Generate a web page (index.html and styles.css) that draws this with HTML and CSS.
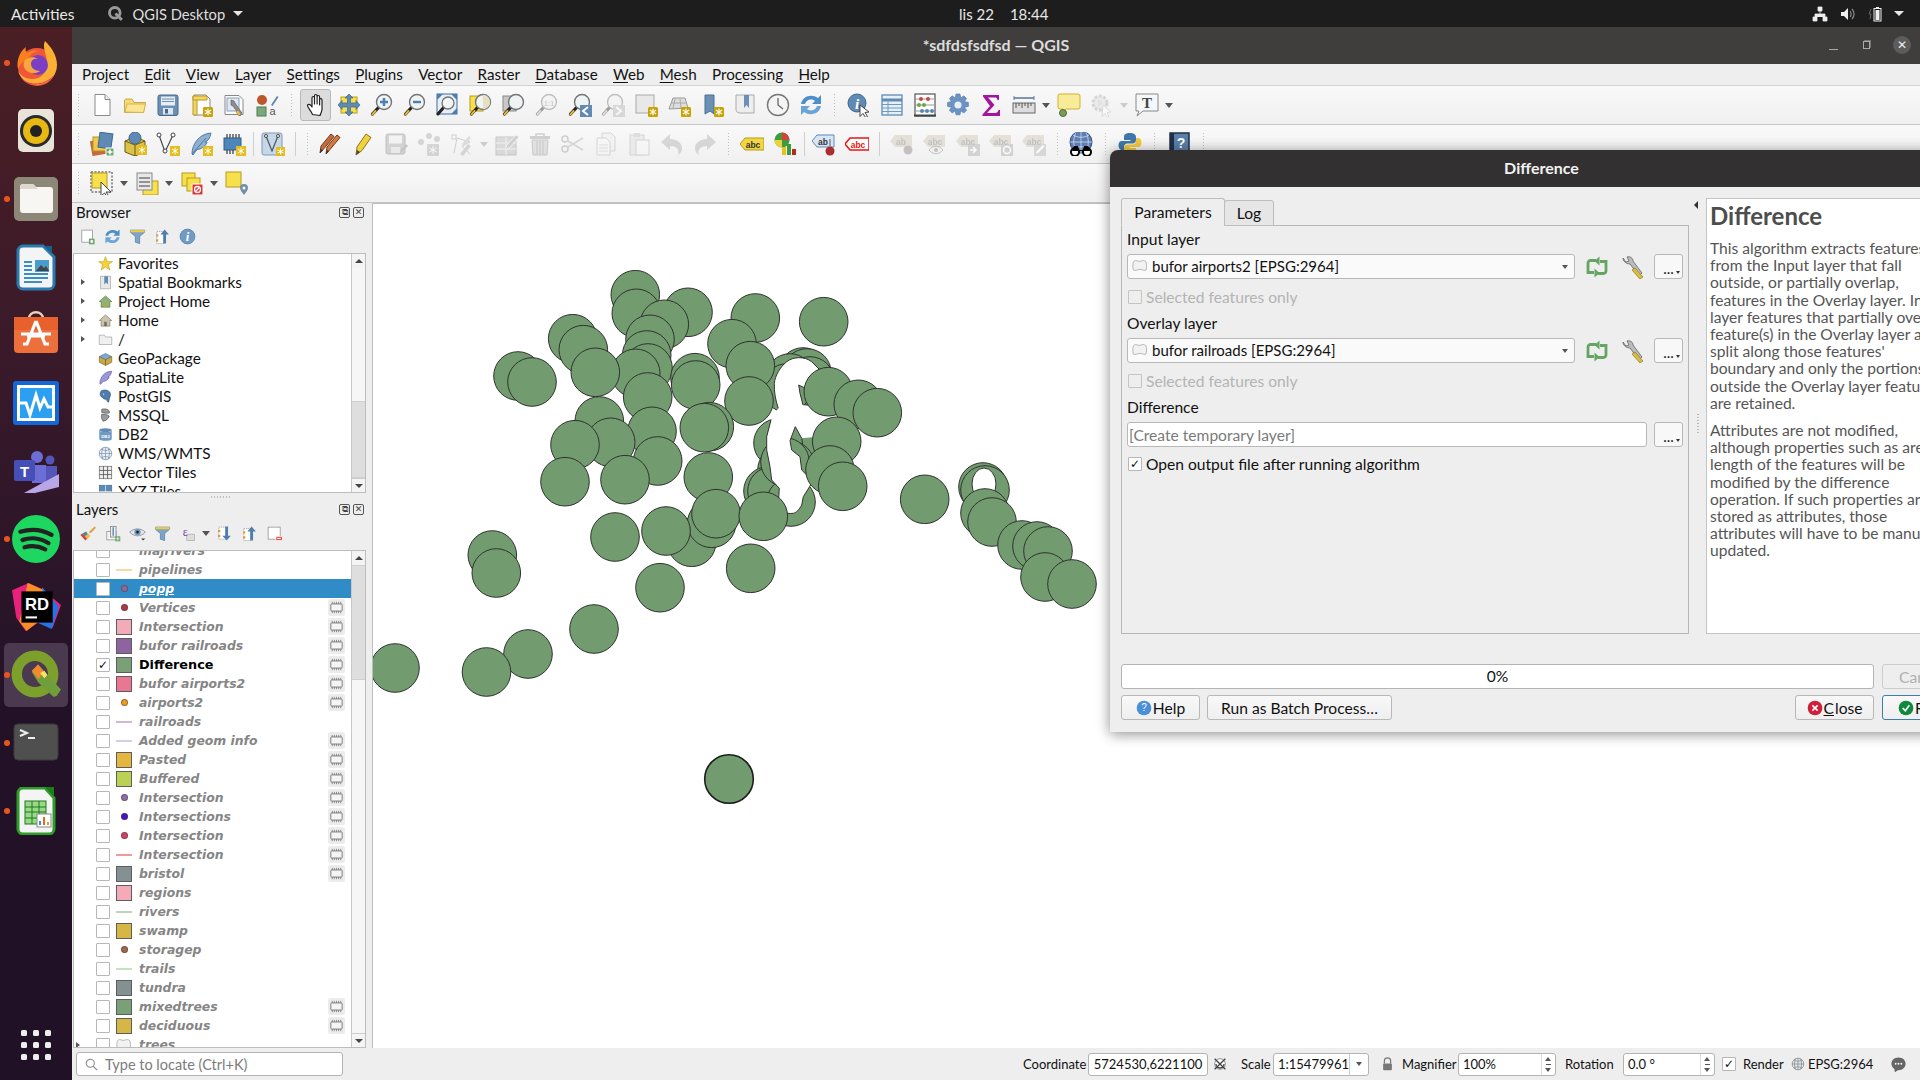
FILE: index.html
```html
<!DOCTYPE html>
<html lang="pl">
<head>
<meta charset="utf-8">
<title>*sdfdsfsdfsd — QGIS</title>
<link rel="stylesheet" href="styles.css">
</head>
<body>
<svg class="defs" aria-hidden="true">
<symbol id="new" viewBox="0 0 24 24"><path d="M5 1.500h10l5 5v16H5z" fill="#fff" stroke="#8a8a8a"/><path d="M15 1.500v5h5" fill="#eee" stroke="#8a8a8a"/></symbol>
<symbol id="open" viewBox="0 0 24 24"><path d="M1.500 7V19.500h19L22.500 9.500H11L9 6H3z" fill="#f6d978" stroke="#c9a848"/><path d="M2 19l2-8h18.500l-2 8.500z" fill="#fbe592" stroke="#d6b552"/></symbol>
<symbol id="save" viewBox="0 0 24 24"><rect x="2" y="2" width="20" height="20.500" rx="2" fill="#6c8fb4" stroke="#446a90"/><rect x="5" y="3.500" width="14" height="9" fill="#e8edf2"/><path d="M6 6h12M6 8.500h12" stroke="#6c8fb4"/><rect x="7" y="15" width="10" height="6.500" fill="#dfe6ee"/><rect x="9" y="16" width="3" height="4.500" fill="#446a90"/></symbol>
<symbol id="badge" viewBox="0 0 24 24"><rect x="14" y="14" width="10" height="10" rx="1.500" fill="#c9a100"/><path d="M19 15.500v7M15.800 17l6.400 4M15.800 21l6.400-4" stroke="#fff" stroke-width="1.100"/></symbol>
<symbol id="layoutnew" viewBox="0 0 24 24"><path d="M5 2h12l4 4v16H5z" fill="#fff" stroke="#888"/><path d="M4 3h4v19H4z" fill="#f3d65b" stroke="#b79a2e"/><path d="M4 3h14v4H4z" fill="#f3d65b" stroke="#b79a2e"/><use href="#badge"/></symbol>
<symbol id="layoutmgr" viewBox="0 0 24 24"><path d="M3 2.500h14l4 4v15H3z" fill="#fff" stroke="#888"/><rect x="5" y="5" width="12" height="13" fill="#dfe8f2" stroke="#8aa0b8"/><path d="M9 7l3 1 1 2 7 10-2 3-7-10-2-1z" fill="#8d8d8d" stroke="#555" stroke-width=".6"/><path d="M16 17l3 4-2 2-3-4z" fill="#e9c23d" stroke="#866" stroke-width=".5"/></symbol>
<symbol id="style" viewBox="0 0 24 24"><circle cx="7" cy="7" r="5" fill="#c0562b"/><path d="M16 12l6-9 1.500 1-6 9z" fill="#5f86ad"/><rect x="2" y="14" width="9" height="9" fill="#79a97a" stroke="#4f7a50"/></symbol>
<symbol id="hand" viewBox="0 0 24 24"><path d="M8.500 21.500c-1-3-5-7-5-9 0-1.500 2-1.500 3-.5l1.500 2V5c0-2 2.500-2 2.500 0v6-8c0-2 2.600-2 2.600 0v8-7c0-2 2.500-2 2.500 0v8-5c0-1.800 2.400-1.800 2.400 0v9c0 3-1.500 5-2 6.500z" fill="#fff" stroke="#222" stroke-width="1.200" stroke-linejoin="round"/></symbol>
<symbol id="pansel" viewBox="0 0 24 24"><rect x="4" y="4" width="16" height="16" fill="#f6e04c" stroke="#c09c1a"/><path d="M12 1l4 4h-2.500v5H19V7.500l4 4.500-4 4.500V14h-5.500v5H16l-4 4-4-4h2.500v-5H5v2.500L1 12l4-4.500V10h5.500V5H8z" fill="#5f8ab4" stroke="#3c658f" stroke-width=".7"/></symbol>
<symbol id="lens" viewBox="0 0 24 24"><path d="M9 14l-6.500 7" stroke="#222" stroke-width="3.200" stroke-linecap="round"/><path d="M5.500 18l-3 3.200" stroke="#e6b92c" stroke-width="2" stroke-linecap="round"/><circle cx="14" cy="9" r="7.500" fill="#f0f3f4" stroke="#6f7578" stroke-width="1.400"/></symbol>
<symbol id="zoomin" viewBox="0 0 24 24"><use href="#lens"/><path d="M14 5v8M10 9h8" stroke="#4f7eae" stroke-width="2.400"/></symbol>
<symbol id="zoomout" viewBox="0 0 24 24"><use href="#lens"/><path d="M10 9h8" stroke="#4f7eae" stroke-width="2.400"/></symbol>
<symbol id="zoomfull" viewBox="0 0 24 24"><rect x="1" y="1" width="20" height="20" fill="#e8eef4" stroke="#3f6f9f"/><path d="M1 1h6L1 7zM21 1v6l-6-6zM21 21h-6l6-6z" fill="#4f7eae"/><path d="M8 14l-6 7" stroke="#222" stroke-width="3" stroke-linecap="round"/><circle cx="12" cy="10" r="6" fill="#f2f4f5" stroke="#6f7578" stroke-width="1.300"/></symbol>
<symbol id="zoomsel" viewBox="0 0 24 24"><rect x="1" y="3" width="13" height="15" fill="#f6e04c" stroke="#b9981c"/><use href="#lens"/><path d="M14 1.800a7.200 7.200 0 010 14.400z" fill="#e7e0c0"/></symbol>
<symbol id="zoomlayer" viewBox="0 0 24 24"><rect x="1" y="3" width="13" height="15" fill="#c8c8c8" stroke="#8a8a8a"/><use href="#lens"/></symbol>
<symbol id="zoomlast" viewBox="0 0 24 24"><use href="#lens"/><rect x="12" y="12" width="12" height="12" fill="#5f8ab4"/><path d="M20 14l-5 4 5 4" fill="none" stroke="#fff" stroke-width="2"/></symbol>
<symbol id="zoomnext" viewBox="0 0 24 24"><use href="#lens"/><rect x="12" y="12" width="12" height="12" fill="#aab4bd"/><path d="M15 14l5 4-5 4" fill="none" stroke="#fff" stroke-width="2"/></symbol>
<symbol id="bookmark" viewBox="0 0 24 24"><rect x="2" y="2" width="18" height="18" fill="#e8e8e8" stroke="#aaa"/><use href="#badge"/></symbol>
<symbol id="temp" viewBox="0 0 24 24"><path d="M2 16L6 5h12l3 10z" fill="#ddd" stroke="#999"/><path d="M8 6l-2 9M13 6l1 9M4 10h15" stroke="#aaa"/><use href="#badge"/></symbol>
<symbol id="bmnew" viewBox="0 0 24 24"><path d="M5 2h9v19l-4-3-5 3z" fill="#6c8fb4" stroke="#4b7096"/><use href="#badge"/></symbol>
<symbol id="bmshow" viewBox="0 0 24 24"><path d="M3 2h18v18H7c-3 0-4-2-4-4z" fill="#eee" stroke="#aaa"/><path d="M11 2h5v13l-2.500-3-2.500 3z" fill="#6c8fb4"/></symbol>
<symbol id="clock" viewBox="0 0 24 24"><circle cx="12" cy="12" r="10.500" fill="#f4f4f4" stroke="#777" stroke-width="1.400"/><path d="M12 5v7l5 4" fill="none" stroke="#666" stroke-width="1.300"/></symbol>
<symbol id="refresh" viewBox="0 0 24 24"><path d="M2 11C3 4 12 0 19 5l3-3v9h-9l3-3C12 5 7 7 6 11z" fill="#4f8fc9"/><path d="M22 13c-1 7-10 11-17 6l-3 3v-9h9l-3 3c4 3 9 1 10-3z" fill="#6aa5da"/></symbol>
<symbol id="identify" viewBox="0 0 24 24"><circle cx="10" cy="10" r="9" fill="#5f8ab4" stroke="#3f678f"/></symbol>
<symbol id="cursor" viewBox="0 0 24 24"><path d="M13 12l9 7-4 .5 2.500 4-2 1-2.500-4-3 3z" fill="#fff" stroke="#333" stroke-width=".9"/></symbol>
<symbol id="table" viewBox="0 0 24 24"><rect x="2" y="2" width="20" height="20" fill="#e8f0f7" stroke="#5f8ab4" stroke-width="1.300"/><path d="M2 7h20" stroke="#5f8ab4" stroke-width="3"/><path d="M2 11.500h20M2 15h20M2 18.500h20M8 7v15" stroke="#6f9ac3"/></symbol>
<symbol id="abacus" viewBox="0 0 24 24"><rect x="2" y="1" width="20" height="22" fill="#fff" stroke="#555" stroke-width="1.200"/><path d="M1 22.500h22" stroke="#444" stroke-width="2"/><path d="M2 6h20M2 12h20M2 18h20" stroke="#999"/><circle cx="8" cy="6" r="2" fill="#c44"/><circle cx="15" cy="6" r="2" fill="#c44"/><circle cx="6" cy="12" r="2" fill="#6a4"/><circle cx="11" cy="12" r="2" fill="#6a4"/><circle cx="9" cy="18" r="2" fill="#58b"/><circle cx="14" cy="18" r="2" fill="#58b"/><circle cx="19" cy="18" r="2" fill="#58b"/></symbol>
<symbol id="gear" viewBox="0 0 24 24"><path d="M10 1h4l.8 4 3-2.200 2.800 2.800-2.200 3 4 .8v4l-4 .8 2.200 3-2.800 2.800-3-2.200-.8 4h-4l-.8-4-3 2.200-2.800-2.800 2.200-3-4-.8v-4l4-.8-2.200-3L6.200 2.800l3 2.200z" fill="#6b94c4" stroke="#4a74a5" stroke-width=".6"/><circle cx="12" cy="12" r="3.500" fill="#e8eef5"/></symbol>
<symbol id="sigma" viewBox="0 0 24 24"><path d="M4 2h16v5h-1.500c-.5-2-1-2.500-3-2.500H9l6.500 7.500L8 20h8c2 0 3-1 3.500-3H21v6H3.500v-1.500L11 13 4 3.500z" fill="#a3159e"/></symbol>
<symbol id="ruler" viewBox="0 0 24 24"><path d="M2 5h20" stroke="#5f7f9f" stroke-width="1.600"/><path d="M2 3v4M22 3v4" stroke="#5f7f9f"/><rect x="1" y="10" width="22" height="10" fill="#ddd" stroke="#666"/><path d="M4 10v5M7 10v3M10 10v5M13 10v3M16 10v5M19 10v3" stroke="#555"/></symbol>
<symbol id="callout" viewBox="0 0 24 24"><path d="M3 1h18a2 2 0 012 2v11a2 2 0 01-2 2H9l-3 3v-3H3a2 2 0 01-2-2V3a2 2 0 012-2z" fill="#f8ec9a" stroke="#d2b12c"/><circle cx="6" cy="20" r="3.500" fill="#7a9b5a" stroke="#4f7030"/></symbol>
<symbol id="macro" viewBox="0 0 24 24"><circle cx="10" cy="10" r="7" fill="#ddd" stroke="#aaa" stroke-width="3" stroke-dasharray="3 1.500"/><path d="M8 6l5 4-5 4z" fill="#c8c8c8"/><path d="M13 12l8 7-4 .5 2 4-2 1-2-4-3 3z" fill="#fff" stroke="#aaa" stroke-width=".8"/></symbol>
<symbol id="textann" viewBox="0 0 24 24"><path d="M1 1h22v17H8l-6 5 2-5H1z" fill="#f4f8fa" stroke="#888"/></symbol>
<symbol id="source" viewBox="0 0 24 24"><rect x="1" y="8" width="14" height="15" fill="#c46a3c" transform="rotate(-10 8 15)"/><rect x="3" y="5" width="13" height="14" fill="#f1c84b" stroke="#b39428"/><rect x="9" y="1" width="13" height="15" fill="#5f8ab4" stroke="#3f678f" transform="rotate(8 15 8)"/><rect x="16" y="16" width="8" height="8" fill="#6fa56f" stroke="#fff"/><path d="M20 17.500v5M17.500 20h5" stroke="#fff" stroke-width="1.500"/></symbol>
<symbol id="gpkg" viewBox="0 0 24 24"><path d="M2 9l10-4 10 4v11l-10 4-10-4z" fill="#ddc24a" stroke="#6b5a14"/><path d="M2 9l10 4 10-4M12 13v11" fill="none" stroke="#6b5a14"/><circle cx="12" cy="6" r="6" fill="#5f8ab4" stroke="#3f678f"/><rect x="14" y="13" width="10" height="10" fill="#e2bd1c"/><path d="M19 14.500v7M15.800 16l6.400 4M15.800 20l6.400-4" stroke="#fff"/></symbol>
<symbol id="newvec" viewBox="0 0 24 24"><path d="M3 3l6 17L17 3" fill="none" stroke="#4a4a4a" stroke-width="1.200"/><circle cx="3" cy="3" r="2" fill="#fff" stroke="#444"/><circle cx="17" cy="3" r="2" fill="#fff" stroke="#444"/><circle cx="9" cy="19" r="2" fill="#fff" stroke="#444"/><rect x="14" y="14" width="10" height="10" fill="#e2bd1c"/><path d="M19 15.500v7M15.800 17l6.400 4M15.800 21l6.400-4" stroke="#fff"/></symbol>
<symbol id="feather" viewBox="0 0 24 24"><path d="M3 22C3 12 10 2 22 1c-1 5-3 8-6 9 1 0 2 0 2 .5-2 4-6 7-10 7L4 23z" fill="#8fb0d0" stroke="#4f7aa5"/><path d="M3 22L17 6" stroke="#4f7aa5"/><rect x="14" y="14" width="10" height="10" fill="#e2bd1c"/><path d="M19 15.500v7M15.800 17l6.400 4M15.800 21l6.400-4" stroke="#fff"/></symbol>
<symbol id="chip" viewBox="0 0 24 24"><rect x="2" y="6" width="17" height="12" fill="#4f86b9" stroke="#2c5d8c"/><path d="M5 2v4M8 2v4M11 2v4M14 2v4M17 2v4M5 18v4M8 18v4M11 18v4" stroke="#444" stroke-width="1.300"/><rect x="14" y="14" width="10" height="10" fill="#e2bd1c"/><path d="M19 15.500v7M15.800 17l6.400 4M15.800 21l6.400-4" stroke="#fff"/></symbol>
<symbol id="virtual" viewBox="0 0 24 24"><rect x="1" y="1" width="20" height="22" rx="2" fill="#c6d7e7" stroke="#7c99b6"/><path d="M5 4l6 15 6-15" fill="none" stroke="#455" stroke-width="1.200"/><circle cx="5" cy="4" r="1.500" fill="#fff" stroke="#444"/><circle cx="17" cy="4" r="1.500" fill="#fff" stroke="#444"/><rect x="15" y="15" width="9" height="9" fill="#e2bd1c"/><path d="M19.500 16.500v6M16.500 18l6 3M16.500 21l6-3" stroke="#fff"/></symbol>
<symbol id="pencils" viewBox="0 0 24 24"><path d="M2 21l1-7 10-12 3 2.500-10 12z" fill="#c86b3c" stroke="#6b3a20"/><path d="M8 22l1-7 10-12 3 2.500-10 12z" fill="#d8793f" stroke="#6b3a20"/><path d="M2 21l1-4 2 1.600zM8 22l1-4 2 1.600z" fill="#333"/></symbol>
<symbol id="pencil" viewBox="0 0 24 24"><path d="M5 23l1-8L15 2l5 3.500-9 13z" fill="#f0d23f" stroke="#8a7420"/><path d="M5 23l1-5 3 2z" fill="#444"/></symbol>
<symbol id="saveedit" viewBox="0 0 24 24"><rect x="2" y="2" width="19" height="20" rx="2" fill="#9aa" stroke="#778"/><rect x="5" y="3.500" width="13" height="8" fill="#eef"/><rect x="7" y="15" width="9" height="6" fill="#ddd"/><path d="M16 22l1-5 5-5 2 2-5 5z" fill="#888"/></symbol>
<symbol id="nodes" viewBox="0 0 24 24"><circle cx="4" cy="10" r="3" fill="#aaa"/><circle cx="12" cy="4" r="3" fill="#aaa"/><circle cx="20" cy="7" r="3" fill="#aaa"/><rect x="10" y="12" width="12" height="12" rx="1" fill="#aaa"/><path d="M16 14v8M12.500 16l7 4M12.500 20l7-4" stroke="#fff"/></symbol>
<symbol id="digit" viewBox="0 0 24 24"><path d="M4 21L7 6l13 4-8 4 8 8" fill="none" stroke="#999"/><rect x="2" y="3" width="4" height="4" fill="#fff" stroke="#999"/><path d="M10 22l8-10 3 2-8 10z" fill="#aaa"/><path d="M19 4l-7 8 2 2 7-8z" fill="#bbb"/></symbol>
<symbol id="tabedit" viewBox="0 0 24 24"><rect x="1" y="5" width="20" height="18" fill="#b8b89a" stroke="#888"/><path d="M1 11h20M1 17h20M11 5v18" stroke="#eee"/><path d="M10 18l2-5 9-10 3 2-9 10z" fill="#999" stroke="#eee"/></symbol>
<symbol id="trash" viewBox="0 0 24 24"><path d="M2 4h20v3H2z" fill="#a99"/><path d="M8 4V2h8v2" fill="none" stroke="#a99" stroke-width="1.500"/><path d="M4 8h16l-1 15H5z" fill="#ccc4c4" stroke="#988"/><path d="M9 9v13M12 9v13M15 9v13" stroke="#988"/></symbol>
<symbol id="scissors" viewBox="0 0 24 24"><circle cx="4" cy="7" r="3" fill="none" stroke="#999" stroke-width="1.500"/><circle cx="4" cy="17" r="3" fill="none" stroke="#999" stroke-width="1.500"/><path d="M6 8.500L22 18M6 15.500L22 6" stroke="#aaa" stroke-width="1.800"/></symbol>
<symbol id="copy" viewBox="0 0 24 24"><path d="M8 1h9l4 4v14H8z" fill="#eee" stroke="#aaa"/><path d="M3 6h9l4 4v13H3z" fill="#f8f8f8" stroke="#aaa"/><path d="M5 13h9M5 16h9M5 19h9" stroke="#bbb"/></symbol>
<symbol id="paste" viewBox="0 0 24 24"><rect x="3" y="3" width="14" height="20" fill="#ddd" stroke="#aaa"/><rect x="7" y="1" width="6" height="4" fill="#bbb"/><rect x="9" y="8" width="13" height="15" fill="#f8f8f8" stroke="#aaa"/></symbol>
<symbol id="undo" viewBox="0 0 24 24"><path d="M1 10L10 2v5c7 0 12 4 12 9 0 3-1 5-4 7 2-6-2-9-8-9v4z" fill="#b0aca4"/></symbol>
<symbol id="redo" viewBox="0 0 24 24"><path d="M23 10L14 2v5C7 7 2 11 2 16c0 3 1 5 4 7-2-6 2-9 8-9v4z" fill="#b0aca4"/></symbol>
<symbol id="lblyel" viewBox="0 0 24 24"><path d="M0 12l5-6h19v12H5z" fill="#f2d742" stroke="#b79b18"/></symbol>
<symbol id="chart" viewBox="0 0 24 24"><circle cx="9" cy="8" r="7.500" fill="#3f9b3f"/><path d="M9 8V.5A7.500 7.500 0 0116.500 8z" fill="#d4423a"/><path d="M9 8H1.500A7.500 7.500 0 009 15.500z" fill="#e8d43a"/><rect x="9" y="15" width="4" height="8" fill="#e8c020"/><rect x="14" y="12" width="4" height="11" fill="#3a9b3a"/><rect x="19" y="17" width="4" height="6" fill="#b42a22"/></symbol>
<symbol id="lblpin" viewBox="0 0 24 24"><path d="M0 9l5-6h17v12H5z" fill="#d7e6f6" stroke="#5f8ab4"/><circle cx="18" cy="19" r="4.500" fill="#a92e2e"/><path d="M18 14V7" stroke="#888" stroke-width="1.500"/></symbol>
<symbol id="lblred" viewBox="0 0 24 24"><path d="M0 12l5-6h19v12H5z" fill="#fff" stroke="#e81414" stroke-width="1.500"/></symbol>
<symbol id="lblg0" viewBox="0 0 24 24"><path d="M0 9l5-6h17v12H5z" fill="#ddd8cc"/></symbol>
<symbol id="lblg1" viewBox="0 0 24 24"><use href="#lblg0"/><circle cx="18" cy="18" r="4.500" fill="#b4aaaa"/></symbol>
<symbol id="lblg2" viewBox="0 0 24 24"><use href="#lblg0"/><path d="M6 18c4-5 10-5 14 0-4 5-10 5-14 0z" fill="#eee" stroke="#aaa"/><circle cx="13" cy="18" r="2" fill="#aaa"/></symbol>
<symbol id="lblg3" viewBox="0 0 24 24"><use href="#lblg0"/><rect x="12" y="12" width="12" height="12" fill="#c5c5c5"/><path d="M14 18h6M17 15l3 3-3 3" stroke="#fff" stroke-width="1.500" fill="none"/></symbol>
<symbol id="lblg4" viewBox="0 0 24 24"><use href="#lblg0"/><rect x="12" y="12" width="12" height="12" fill="#c5c5c5"/><circle cx="18" cy="18" r="3.500" fill="none" stroke="#fff" stroke-width="1.500"/></symbol>
<symbol id="lblg5" viewBox="0 0 24 24"><use href="#lblg0"/><rect x="12" y="12" width="12" height="12" fill="#ccc"/><path d="M14 22l1-3 6-6 1.500 1.500-6 6z" fill="#fff"/></symbol>
<symbol id="binoc" viewBox="0 0 24 24"><circle cx="12" cy="10" r="11" fill="#5f7fb4" stroke="#2f4f7f"/><path d="M1 10h22M12-1v22M4 3c5 3 11 3 16 0M4 17c5-3 11-3 16 0M7 0c-3 6-3 14 0 20M17 0c3 6 3 14 0 20" stroke="#dfe8f5" stroke-width=".7" fill="none"/><circle cx="6" cy="20" r="4" fill="#fff" stroke="#000" stroke-width="2"/><circle cx="18" cy="20" r="4" fill="#fff" stroke="#000" stroke-width="2"/><path d="M5 14h4l1 4h4l1-4h4l2 5H3z" fill="#000"/></symbol>
<symbol id="python" viewBox="0 0 24 24"><path d="M12 1C8 1 6 2 6 5v3h6.500v1H4c-2.500 0-3.500 2-3.500 4.500S2 18 4 18h2v-3c0-2 1.500-3.500 3.500-3.500h5c2 0 3.500-1.500 3.500-3.500V5c0-2.500-2.500-4-6-4z" fill="#3e78a8"/><path d="M12 23c4 0 6-1 6-4v-3h-6.500v-1H20c2.500 0 3.500-2 3.500-4.500S22 6 20 6h-2v3c0 2-1.500 3.500-3.500 3.500h-5C7.500 12.500 6 14 6 16v3c0 2.500 2.500 4 6 4z" fill="#f2c93d"/></symbol>
<symbol id="helpbook" viewBox="0 0 24 24"><rect x="3" y="1" width="19" height="23" fill="#5a7fa8" stroke="#1f3048" stroke-width="1.500"/><rect x="3" y="1" width="4" height="23" fill="#1f3048"/></symbol>
<symbol id="selrect" viewBox="0 0 24 24"><rect x="1" y="1" width="21" height="20" fill="none" stroke="#333" stroke-dasharray="2 1.500"/><rect x="2" y="2" width="15" height="15" fill="#f6e04c" stroke="#b9981c"/><path d="M11 11l10 10h-5l2 3-1.500 1-2-3-3.500 3z" fill="#fff" stroke="#333" stroke-width=".9"/></symbol>
<symbol id="selform" viewBox="0 0 24 24"><rect x="8" y="10" width="15" height="14" fill="#f6e04c" stroke="#b9981c"/><rect x="2" y="2" width="15" height="17" fill="#e8e8e8" stroke="#888"/><path d="M4 7h11M4 11h11M4 15h11" stroke="#777" stroke-width="1.500"/></symbol>
<symbol id="desel" viewBox="0 0 24 24"><rect x="2" y="2" width="13" height="13" fill="#f6e04c" stroke="#b9981c"/><rect x="7" y="7" width="13" height="13" fill="#f6e04c" stroke="#b9981c"/><rect x="12" y="13" width="11" height="11" rx="1" fill="#e03030" stroke="#fff"/><circle cx="17.500" cy="18.500" r="3" fill="none" stroke="#fff" stroke-width="1.300"/><path d="M15.500 20.500l4-4" stroke="#fff" stroke-width="1.300"/></symbol>
<symbol id="selloc" viewBox="0 0 24 24"><rect x="1" y="1" width="15" height="15" fill="#f6e04c" stroke="#b9981c"/><path d="M19 24c-2-3-4-5-4-7a4 4 0 018 0c0 2-2 4-4 7z" fill="#6f8fa8"/><circle cx="19" cy="17" r="1.500" fill="#fff"/></symbol>
<symbol id="addgrp" viewBox="0 0 24 24"><rect x="4" y="3" width="15" height="17" fill="#fff" stroke="#888"/><rect x="14" y="15" width="8" height="8" fill="#6fa56f"/><circle cx="18" cy="19" r="2" fill="#fff"/></symbol>
<symbol id="filter" viewBox="0 0 24 24"><path d="M2 3h20v3l-7 6v10l-6-2v-8L2 6z" fill="#7fa4c8" stroke="#4f7aa5"/><path d="M2 3h20v3H2z" fill="#eecb45"/></symbol>
<symbol id="coll" viewBox="0 0 24 24"><rect x="4" y="5" width="10" height="17" fill="#fff" stroke="#999" stroke-dasharray="2 1"/><rect x="3" y="9" width="3" height="3" fill="#e89030"/><rect x="3" y="16" width="3" height="3" fill="#e89030"/><path d="M15 2l-6 7h4v13h4V9h4z" fill="#4f7eae"/></symbol>
<symbol id="expd" viewBox="0 0 24 24"><rect x="4" y="3" width="10" height="17" fill="#fff" stroke="#999" stroke-dasharray="2 1"/><rect x="3" y="7" width="3" height="3" fill="#e89030"/><rect x="3" y="14" width="3" height="3" fill="#e89030"/><path d="M15 22l-6-7h4V2h4v13h4z" fill="#4f7eae"/></symbol>
<symbol id="info" viewBox="0 0 24 24"><circle cx="12" cy="12" r="10.500" fill="#6f9bc5" stroke="#4f7aa5"/></symbol>
<symbol id="brush" viewBox="0 0 24 24"><path d="M22 2l-8 8 2 2 8-8z" fill="#d8a040"/><path d="M2 14l8-5 6 6-5 6z" fill="#e8c050"/><path d="M2 14l3-2 6 7-2 3z" fill="#c44"/><path d="M5 12l5-3 2 4-4 3z" fill="#48a"/></symbol>
<symbol id="addlayer" viewBox="0 0 24 24"><rect x="4" y="9" width="13" height="12" fill="#f4f4f4" stroke="#888"/><rect x="9" y="2" width="8" height="15" fill="#e8eef4" stroke="#777"/><path d="M13 3v12" stroke="#5f8ab4" stroke-width="2"/><rect x="16" y="16" width="7" height="7" fill="#6fa56f"/><path d="M19.500 17v5M17 19.500h5" stroke="#fff"/></symbol>
<symbol id="eye" viewBox="0 0 24 24"><path d="M1 10c6-6 16-6 22 0-6 7-16 7-22 0z" fill="#e2e8ee" stroke="#778"/><circle cx="12" cy="10" r="4.500" fill="#6f94b8"/><circle cx="12" cy="10" r="2" fill="#223"/><path d="M17 19h6l-3 3z" fill="#444"/></symbol>
<symbol id="filterexp" viewBox="0 0 24 24"><rect x="11" y="13" width="11" height="9" fill="#ddd" stroke="#aaa"/></symbol>
<symbol id="remove" viewBox="0 0 24 24"><rect x="3" y="3" width="17" height="17" fill="#fff" stroke="#888"/><rect x="14" y="16" width="9" height="6" fill="#e84c4c" stroke="#fff"/><path d="M16 19h5" stroke="#fff" stroke-width="1.500"/></symbol>
<symbol id="folderg" viewBox="0 0 24 24"><path d="M2 6c3-4 6-1 9-1s7-3 10 1c1 3 1 9 0 12-2 2-6-1-9-1s-7 3-10 1c-1-3-1-9 0-12z" fill="#f2f2f2" stroke="#999"/></symbol>
<symbol id="memchip" viewBox="0 0 24 24"><rect x="4" y="7" width="16" height="10" rx="1" fill="#f5f5f5" stroke="#7e7e7e" stroke-width="1.400"/><path d="M6 4v3M9 4v3M12 4v3M15 4v3M18 4v3M6 17v3M9 17v3M12 17v3M15 17v3M18 17v3" stroke="#7e7e7e" stroke-width="1.200"/></symbol>
<symbol id="star" viewBox="0 0 24 24"><path d="M12 1l3 8h8l-6.500 5 2.500 8.500-7-5-7 5L7.500 14 1 9h8z" fill="#f4d23c" stroke="#c2a020"/></symbol>
<symbol id="bkm" viewBox="0 0 24 24"><path d="M4 2h16v20H4z" fill="#e8e8e8" stroke="#999"/><path d="M10 2h6v13l-3-3-3 3z" fill="#5f8ab4"/></symbol>
<symbol id="phome" viewBox="0 0 24 24"><path d="M2 12L12 3l10 9h-3v9H5v-9z" fill="#8cb37a" stroke="#4f7a3c"/><rect x="10" y="14" width="4" height="7" fill="#c8a040"/></symbol>
<symbol id="home" viewBox="0 0 24 24"><path d="M2 12L12 3l10 9h-3v9H5v-9z" fill="#c9c3b0" stroke="#77705c"/><rect x="10" y="14" width="4" height="7" fill="#7d6a4a"/></symbol>
<symbol id="rootf" viewBox="0 0 24 24"><path d="M2 5h8l2 3h10v12H2z" fill="#f0f0f0" stroke="#999"/></symbol>
<symbol id="gpk" viewBox="0 0 24 24"><path d="M2 9l10-5 10 5-10 5z" fill="#7daad0" stroke="#3f6c94"/><path d="M2 9v9l10 5v-9zM22 9v9l-10 5v-9z" fill="#c8a848" stroke="#7a642a"/></symbol>
<symbol id="feath" viewBox="0 0 24 24"><path d="M3 22C3 12 10 2 22 2c-1 5-3 8-6 9 1 0 2 0 2 .5-2 4-6 7-10 7L4 23z" fill="#9c98d8" stroke="#5c58a8"/></symbol>
<symbol id="elephant" viewBox="0 0 24 24"><path d="M5 3c6-3 15-1 15 6 0 3-2 5-2 7l-1 5c-2 0-3-2-3-5-3 1-5 0-7-3-3 0-5-5-2-10z" fill="#4f7eae" stroke="#244e78"/><circle cx="9" cy="8" r="1" fill="#fff"/></symbol>
<symbol id="mssql" viewBox="0 0 24 24"><path d="M6 2c8-2 14 2 12 6-4 1-9 0-12-1zM6 10c5 0 10 1 12 3-2 5-6 8-10 8-2-3-3-7-2-11z" fill="#9b9b9b" stroke="#444"/></symbol>
<symbol id="db2" viewBox="0 0 24 24"><ellipse cx="12" cy="5" rx="10" ry="3" fill="#5f8ab4"/><path d="M2 5v14c0 4 20 4 20 0V5c0 4-20 4-20 0z" fill="#6f9ac3"/></symbol>
<symbol id="wms" viewBox="0 0 24 24"><circle cx="12" cy="12" r="10" fill="#ecf0f4" stroke="#5f7f9f"/><path d="M2 12h20M12 2v20M5 5c4 3 10 3 14 0M5 19c4-3 10-3 14 0M8 3c-3 6-3 12 0 18M16 3c3 6 3 12 0 18" stroke="#5f7f9f" fill="none" stroke-width=".9"/></symbol>
<symbol id="vtiles" viewBox="0 0 24 24"><rect x="2" y="2" width="20" height="20" fill="#eee" stroke="#555"/><path d="M2 8.700h20M2 15.300h20M8.700 2v20M15.300 2v20" stroke="#555" stroke-width="1.300"/></symbol>
<symbol id="xyz" viewBox="0 0 24 24"><rect x="2" y="2" width="20" height="20" fill="#5f8ab4" stroke="#3f678f"/><path d="M2 12h20M12 2v20" stroke="#fff"/></symbol>
<symbol id="reload" viewBox="0 0 24 24"><path d="M11 5.500H5.500a2.500 2.500 0 00-2.500 2.500v9.500h6M13 18.500h5.500a2.500 2.500 0 002.500-2.500V6.500h-6" fill="none" stroke="#64a564" stroke-width="2.800"/><path d="M9.500 13.500l5 4.500-5 4.500zM14.500 1.500l-5 4.500 5 4.500z" fill="#64a564"/></symbol>
<symbol id="wrench" viewBox="0 0 24 24"><path d="M2 3l3 4 3-1-2-4c3-1 6 1 6 4l9 12-3 3-9-12C6 9 2 7 2 3z" fill="#bbb" stroke="#555" stroke-width=".7"/><path d="M14 13l8 9-3 2-8-9z" fill="#dcbc3e" stroke="#7c6a20" stroke-width=".6"/></symbol>
<symbol id="lock" viewBox="0 0 24 24"><path d="M7 11V7a5 5 0 0110 0v4" fill="none" stroke="#777" stroke-width="2"/><rect x="5" y="11" width="14" height="11" rx="1.500" fill="#777"/></symbol>
<symbol id="crs" viewBox="0 0 24 24"><circle cx="12" cy="12" r="8" fill="#fff" stroke="#666"/><path d="M4 4l16 16M20 4L4 20M6 12a6 6 0 0012 0" stroke="#444" stroke-width="2" fill="none"/></symbol>
<symbol id="globe" viewBox="0 0 24 24"><circle cx="12" cy="12" r="10" fill="#dfe3e6" stroke="#6a7278"/><path d="M2 12h20M12 2v20M5 5c4 3 10 3 14 0M5 19c4-3 10-3 14 0M8 3c-3 6-3 12 0 18M16 3c3 6 3 12 0 18" stroke="#6a7278" fill="none" stroke-width=".9"/></symbol>
<symbol id="msg" viewBox="0 0 24 24"><path d="M12 2C6 2 2 6 2 11c0 3 2 6 4 7l1 5 4-3h1c6 0 10-4 10-9s-4-9-10-9z" fill="#666"/><circle cx="8" cy="11" r="1.300" fill="#fff"/><circle cx="12" cy="11" r="1.300" fill="#fff"/><circle cx="16" cy="11" r="1.300" fill="#fff"/></symbol>
<symbol id="qhelp" viewBox="0 0 24 24"><circle cx="12" cy="12" r="11" fill="#4a90d9"/></symbol>
<symbol id="qclose" viewBox="0 0 24 24"><circle cx="12" cy="12" r="11" fill="#d01f3a"/><path d="M8 8l8 8M16 8l-8 8" stroke="#fff" stroke-width="2.400"/></symbol>
<symbol id="qok" viewBox="0 0 24 24"><circle cx="12" cy="12" r="11" fill="#10893e"/><path d="M7 12l4 4 6-8" fill="none" stroke="#fff" stroke-width="2.400"/></symbol>
</svg>

<div class="topbar">
  <span class="tb-act">Activities</span>
  <span class="tb-app">
    <svg class="tb-q" viewBox="0 0 24 24"><circle cx="11" cy="11" r="7.500" fill="none" stroke="#9a9a9a" stroke-width="4"/><path d="M12 12l9 9" stroke="#9a9a9a" stroke-width="4"/></svg>
    QGIS Desktop <span class="caret"></span>
  </span>
  <span class="tb-clock"><span>lis 22</span><span>18:44</span></span>
  <span class="tb-tray">
    <svg class="tray" viewBox="0 0 16 16"><path d="M6 1h4v4H6zM1 11h4v4H1zM11 11h4v4h-4zM8 5v3M3 11V8h10v3" fill="#eee" stroke="#eee" stroke-width=".8"/></svg>
    <svg class="tray" viewBox="0 0 16 16"><path d="M1 6h3l4-4v12l-4-4H1z" fill="#eee"/><path d="M10 5c1.500 2 1.500 4 0 6M12 3c2.500 3 2.500 7 0 10" fill="none" stroke="#888" stroke-width="1.200"/></svg>
    <svg class="tray" viewBox="0 0 16 16"><path d="M3 3L1 8h2l-1 5" fill="none" stroke="#666"/><rect x="6" y="2.500" width="7" height="12.500" fill="none" stroke="#eee"/><rect x="7.500" y="4" width="4" height="10" fill="#eee"/><rect x="8" y="1" width="3" height="1.500" fill="#eee"/></svg>
    <span class="caret"></span>
  </span>
</div>

<div class="desktop">
  <nav class="dock">
    <div class="dk dk-run">
      <svg class="dk-ic" viewBox="0 0 48 48"><circle cx="25" cy="28" r="19" fill="#f0573a"/><path d="M33 2c6 6 12 14 12 24a20 20 0 01-39 6c3 5 8 8 14 8 10 0 16-8 15-18C34 14 30 8 33 2z" fill="#fbb033"/><path d="M6 30C4 22 8 12 14 8c-1 3 0 5 1 6 3-2 7-3 11-2-5 1-9 4-10 9-3 1-7 2-10 9z" fill="#f8801f"/><circle cx="26" cy="26" r="10" fill="#7b3fc4"/><path d="M13 21c4-3 9-4 13-1-5-1-7 2-7 5 0 4 4 7 9 7-5 4-14 2-16-4-1-3 0-5 1-7z" fill="#f9a63c"/><path d="M8 38c6 8 24 10 34-2-5 10-26 14-34 2z" fill="#ec2a6c"/></svg>
    </div>
    <div class="dk">
      <svg class="dk-ic" viewBox="0 0 48 48"><rect x="6" y="2" width="36" height="43" rx="5" fill="#e8e4da"/><circle cx="24" cy="24" r="16" fill="#2a2a2a"/><circle cx="24" cy="24" r="13" fill="#e8b813"/><circle cx="24" cy="24" r="6" fill="#222"/></svg>
    </div>
    <div class="dk dk-run">
      <svg class="dk-ic" viewBox="0 0 48 48"><rect x="2" y="2" width="44" height="44" rx="5" fill="#8d8778"/><path d="M8 12c0-2 1-3 3-3h10l3 3h14c2 0 3 1 3 3v20c0 2-1 3-3 3H11c-2 0-3-1-3-3z" fill="#f7f6f3"/><path d="M8 14c0-2 1-5 3-5h10l5 5z" fill="#dcd8ce"/></svg>
    </div>
    <div class="dk">
      <svg class="dk-ic" viewBox="0 0 48 48"><path d="M6 8a5 5 0 015-5h20l11 11v27a5 5 0 01-5 5H11a5 5 0 01-5-5z" fill="#f4f4f4" stroke="#2a7ab0" stroke-width="3"/><path d="M32 3h8v8l-8-8z" fill="#1b5f8c"/><path d="M12 19h8M12 23h8M12 27h8M12 31h24M12 35h24M12 39h18" stroke="#3b8ec4" stroke-width="2"/><rect x="23" y="17" width="14" height="12" fill="#4a9ccc"/><path d="M24 28l5-6 3 3 2-2 3 5z" fill="#444"/></svg>
    </div>
    <div class="dk">
      <svg class="dk-ic" viewBox="0 0 48 48"><path d="M17 8c0-9 14-9 14 0" fill="none" stroke="#eed2b8" stroke-width="2.500"/><rect x="2" y="6" width="44" height="36" rx="4" fill="#ec6f3c"/><path d="M2 6h44v13H2z" fill="#e8602c"/><path d="M24 10l-9 23h-4M24 10l9 23h4M15 25h18M9 23h30" fill="none" stroke="#fff" stroke-width="3.200"/></svg>
    </div>
    <div class="dk">
      <svg class="dk-ic" viewBox="0 0 48 48"><rect x="1" y="2" width="46" height="44" rx="3" fill="#1268d8"/><rect x="5" y="6" width="38" height="36" fill="#fff"/><rect x="8" y="9" width="32" height="30" fill="#2b9ff0"/><path d="M8 24h6l4 12 6-20 4 13 4-9 4 8h4" fill="none" stroke="#fff" stroke-width="3"/></svg>
    </div>
    <div class="dk">
      <svg class="dk-ic" viewBox="0 0 48 48"><circle cx="25" cy="10" r="6" fill="#6d6dd6"/><circle cx="38" cy="13" r="4.500" fill="#5355b8"/><path d="M20 18h14v18H20z" fill="#6d6dd6"/><path d="M34 19h11v12l-11 5z" fill="#5355b8"/><rect x="2" y="13" width="21" height="21" rx="2" fill="#464eb8"/><text x="12.500" y="30" class="dk-t">T</text><path d="M12 46l35-19v13l-24 6z" fill="#b8a6e8"/></svg>
    </div>
    <div class="dk dk-run">
      <svg class="dk-ic dk-lg" viewBox="0 0 48 48"><circle cx="24" cy="24" r="23" fill="#1ed760"/><path d="M9 17c10-3 21-2 30 3M11 25c8-3 18-2 25 3M13 32c7-2 14-1 20 2" fill="none" stroke="#222" stroke-width="4" stroke-linecap="round"/></svg>
    </div>
    <div class="dk">
      <svg class="dk-ic dk-lg" viewBox="0 0 48 48"><path d="M1 8L17 1l13 6 18 15-8 22-14-5-12 8L5 34z" fill="#e8217a"/><path d="M30 5L46 24l-7 21-16-7z" fill="#2474e8"/><path d="M16 1l14 6 5 24-20 16L8 38z" fill="#f98d26"/><rect x="10" y="9" width="30" height="30" fill="#000"/><text x="25" y="27" class="dk-rd">RD</text><path d="M14 34h11" stroke="#fff" stroke-width="2"/></svg>
    </div>
    <div class="dk dk-run dk-act">
      <svg class="dk-ic dk-lg" viewBox="0 0 48 48"><circle cx="23" cy="23" r="17.500" fill="none" stroke="#7da02d" stroke-width="10"/><path d="M20 21l6-7 9 10 13 14-4 6-3 1-15-14z" fill="#709e3a"/><path d="M20 20l6-6 6 7-6 7z" fill="#ef8b2e"/><path d="M28 22l4-2 3 4-3 3z" fill="#f2e56a"/></svg>
    </div>
    <div class="dk dk-run">
      <svg class="dk-ic" viewBox="0 0 48 48"><rect x="2" y="5" width="44" height="36" rx="4" fill="#4f4f4f" stroke="#3a3a3a"/><path d="M8 11l7 3-7 3M16 19h7" fill="none" stroke="#eee" stroke-width="2"/></svg>
    </div>
    <div class="dk dk-run">
      <svg class="dk-ic" viewBox="0 0 48 48"><path d="M6 6a5 5 0 015-5h22l9 10v31a5 5 0 01-5 5H11a5 5 0 01-5-5z" fill="#f4f4f4" stroke="#2f9c2a" stroke-width="3"/><path d="M33 0l9 0v10z" fill="#1e7a1a"/><rect x="13" y="14" width="21" height="23" fill="#98d888" stroke="#1e7a1a"/><path d="M13 20h21M13 25h21M13 31h21M20 14v23M27 14v23" stroke="#1e7a1a"/><rect x="25" y="27" width="14" height="13" fill="#fff" stroke="#888"/><path d="M28 38v-4" stroke="#3a8bd0" stroke-width="2"/><path d="M32 38v-8" stroke="#e06a20" stroke-width="2"/><path d="M36 38v-3" stroke="#e0a020" stroke-width="2"/></svg>
    </div>
    <div class="dk-apps">
      <i></i><i></i><i></i><i></i><i></i><i></i><i></i><i></i><i></i>
    </div>
  </nav>

  <div class="window">
    <header class="win-title">
      <span class="win-name">*sdfdsfsdfsd — QGIS</span>
      <span class="win-ctl">
        <span class="ctl-min"></span>
        <span class="ctl-max"></span>
        <span class="ctl-close">✕</span>
      </span>
    </header>
    <div class="menubar">
      <span>Pro<u>j</u>ect</span><span><u>E</u>dit</span><span><u>V</u>iew</span><span><u>L</u>ayer</span><span><u>S</u>ettings</span><span><u>P</u>lugins</span><span>Ve<u>c</u>tor</span><span><u>R</u>aster</span><span><u>D</u>atabase</span><span><u>W</u>eb</span><span><u>M</u>esh</span><span>Pro<u>c</u>essing</span><span><u>H</u>elp</span>
    </div>

    <div class="toolbar">
      <i class="grip g13"></i>
      <b class="i"><svg><use href="#new"/></svg></b><b class="i"><svg><use href="#open"/></svg></b><b class="i"><svg><use href="#save"/></svg></b><b class="i"><svg><use href="#layoutnew"/></svg></b><b class="i"><svg><use href="#layoutmgr"/></svg></b><b class="i"><svg viewBox="0 0 24 24"><use href="#style"/><text x="14.500" y="22" class="it-a">a</text></svg></b>
      <i class="grip g16"></i>
      <b class="i on"><svg><use href="#hand"/></svg></b><b class="i"><svg><use href="#pansel"/></svg></b><b class="i"><svg><use href="#zoomin"/></svg></b><b class="i"><svg><use href="#zoomout"/></svg></b><b class="i"><svg><use href="#zoomfull"/></svg></b><b class="i"><svg><use href="#zoomsel"/></svg></b><b class="i"><svg><use href="#zoomlayer"/></svg></b><b class="i off"><svg viewBox="0 0 24 24"><use href="#lens"/><text x="14" y="12.500" class="it-11">1:1</text></svg></b><b class="i"><svg><use href="#zoomlast"/></svg></b><b class="i off"><svg><use href="#zoomnext"/></svg></b><b class="i"><svg><use href="#bookmark"/></svg></b><b class="i"><svg><use href="#temp"/></svg></b><b class="i"><svg><use href="#bmnew"/></svg></b><b class="i"><svg><use href="#bmshow"/></svg></b><b class="i"><svg><use href="#clock"/></svg></b><b class="i"><svg><use href="#refresh"/></svg></b>
      <i class="grip g15"></i>
      <b class="i"><svg viewBox="0 0 24 24"><use href="#identify"/><text x="10" y="16" class="it-i">i</text><use href="#cursor"/></svg></b><b class="i"><svg><use href="#table"/></svg></b><b class="i"><svg><use href="#abacus"/></svg></b><b class="i"><svg><use href="#gear"/></svg></b><b class="i"><svg><use href="#sigma"/></svg></b><b class="i"><svg><use href="#ruler"/></svg></b><i class="arr"></i><b class="i"><svg><use href="#callout"/></svg></b><b class="i off"><svg><use href="#macro"/></svg></b><i class="arr arr-off"></i><b class="i"><svg viewBox="0 0 24 24"><use href="#textann"/><text x="12" y="15" class="it-t">T</text></svg></b><i class="arr"></i>
    </div>

    <div class="toolbar">
      <i class="grip g13"></i>
      <b class="i"><svg><use href="#source"/></svg></b><b class="i"><svg><use href="#gpkg"/></svg></b><b class="i"><svg><use href="#newvec"/></svg></b><b class="i"><svg><use href="#feather"/></svg></b><b class="i"><svg><use href="#chip"/></svg></b><i class="sep s6"></i><b class="i"><svg><use href="#virtual"/></svg></b><i class="sep s12"></i><i class="grip g12"></i>
      <b class="i"><svg><use href="#pencils"/></svg></b><b class="i"><svg><use href="#pencil"/></svg></b><b class="i off"><svg><use href="#saveedit"/></svg></b><b class="i off"><svg><use href="#nodes"/></svg></b><b class="i off"><svg><use href="#digit"/></svg></b><i class="arr arr-off"></i><b class="i off"><svg><use href="#tabedit"/></svg></b><b class="i off"><svg><use href="#trash"/></svg></b><b class="i off"><svg><use href="#scissors"/></svg></b><b class="i off"><svg><use href="#copy"/></svg></b><b class="i off"><svg><use href="#paste"/></svg></b><b class="i off"><svg><use href="#undo"/></svg></b><b class="i off"><svg><use href="#redo"/></svg></b>
      <i class="grip g14"></i>
      <b class="i"><svg viewBox="0 0 24 24"><use href="#lblyel"/><text x="13" y="16" class="it-abc">abc</text></svg></b><b class="i"><svg><use href="#chart"/></svg></b><i class="sep s6"></i><b class="i"><svg viewBox="0 0 24 24"><use href="#lblpin"/><text x="11" y="12.500" class="it-abc">ab</text></svg></b><b class="i"><svg viewBox="0 0 24 24"><use href="#lblred"/><text x="13" y="16" class="it-abc it-red">abc</text></svg></b><i class="sep s12"></i><b class="i off2"><svg viewBox="0 0 24 24"><use href="#lblg1"/><text x="11" y="12.500" class="it-abc it-gray">ab</text></svg></b><b class="i off2"><svg viewBox="0 0 24 24"><use href="#lblg2"/><text x="12" y="12.500" class="it-abc it-gray">abc</text></svg></b><b class="i off2"><svg viewBox="0 0 24 24"><use href="#lblg3"/><text x="12" y="12.500" class="it-abc it-gray">abc</text></svg></b><b class="i off2"><svg viewBox="0 0 24 24"><use href="#lblg4"/><text x="12" y="12.500" class="it-abc it-gray">abc</text></svg></b><b class="i off2"><svg viewBox="0 0 24 24"><use href="#lblg5"/><text x="12" y="12.500" class="it-abc it-gray">abc</text></svg></b>
      <i class="grip g14"></i>
      <b class="i"><svg><use href="#binoc"/></svg></b>
      <i class="grip g16"></i>
      <b class="i"><svg><use href="#python"/></svg></b>
      <i class="grip g16"></i>
      <b class="i"><svg viewBox="0 0 24 24"><use href="#helpbook"/><text x="14" y="16" class="it-q">?</text></svg></b>
      <i class="grip g16"></i>
    </div>

    <div class="toolbar">
      <i class="grip g13"></i>
      <b class="i"><svg><use href="#selrect"/></svg></b><i class="arr"></i><b class="i"><svg><use href="#selform"/></svg></b><i class="arr"></i><b class="i"><svg><use href="#desel"/></svg></b><i class="arr"></i><b class="i"><svg><use href="#selloc"/></svg></b>
    </div>

    <div class="middle">
      <aside class="side">
        <section class="dockw dock-browser">
          <div class="dock-title"><span>Browser</span><span class="dock-btns"><i class="dbtn">⧉</i><i class="dbtn">✕</i></span></div>
          <div class="dock-tools">
            <b class="t"><svg><use href="#addgrp"/></svg></b><b class="t"><svg><use href="#refresh"/></svg></b><b class="t"><svg><use href="#filter"/></svg></b><b class="t"><svg><use href="#coll"/></svg></b><b class="t"><svg viewBox="0 0 24 24"><use href="#info"/><text x="12" y="18" class="it-i it-i2">i</text></svg></b>
          </div>
          <div class="tree">
            <div class="tree-in">
              <div class="br"><i class="exp-none"></i><svg class="bi"><use href="#star"/></svg>Favorites</div>
              <div class="br"><i class="exp"></i><svg class="bi"><use href="#bkm"/></svg>Spatial Bookmarks</div>
              <div class="br"><i class="exp"></i><svg class="bi"><use href="#phome"/></svg>Project Home</div>
              <div class="br"><i class="exp"></i><svg class="bi"><use href="#home"/></svg>Home</div>
              <div class="br"><i class="exp"></i><svg class="bi"><use href="#rootf"/></svg>/</div>
              <div class="br"><i class="exp-none"></i><svg class="bi"><use href="#gpk"/></svg>GeoPackage</div>
              <div class="br"><i class="exp-none"></i><svg class="bi"><use href="#feath"/></svg>SpatiaLite</div>
              <div class="br"><i class="exp-none"></i><svg class="bi"><use href="#elephant"/></svg>PostGIS</div>
              <div class="br"><i class="exp-none"></i><svg class="bi"><use href="#mssql"/></svg>MSSQL</div>
              <div class="br"><i class="exp-none"></i><svg class="bi" viewBox="0 0 24 24"><use href="#db2"/><text x="12" y="17" class="it-db">DB2</text></svg>DB2</div>
              <div class="br"><i class="exp-none"></i><svg class="bi"><use href="#wms"/></svg>WMS/WMTS</div>
              <div class="br"><i class="exp-none"></i><svg class="bi"><use href="#vtiles"/></svg>Vector Tiles</div>
              <div class="br"><i class="exp-none"></i><svg class="bi"><use href="#xyz"/></svg>XYZ Tiles</div>
            </div>
            <div class="vscroll vs-browser"><i class="sb-up"></i><i class="sb-thumb"></i><i class="sb-down"></i></div>
          </div>
        </section>
        <div class="splitter"><i></i></div>
        <section class="dockw dock-layers">
          <div class="dock-title"><span>Layers</span><span class="dock-btns"><i class="dbtn">⧉</i><i class="dbtn">✕</i></span></div>
          <div class="dock-tools">
            <b class="t"><svg><use href="#brush"/></svg></b><b class="t"><svg><use href="#addlayer"/></svg></b><b class="t"><svg><use href="#eye"/></svg></b><b class="t"><svg><use href="#filter"/></svg></b><b class="t"><svg viewBox="0 0 24 24"><use href="#filterexp"/><text x="9" y="15" class="it-eps">ε</text></svg></b><i class="arr arr-t"></i><b class="t"><svg><use href="#expd"/></svg></b><b class="t"><svg><use href="#coll"/></svg></b><b class="t"><svg><use href="#remove"/></svg></b>
          </div>
          <div class="tree">
            <div class="tree-in layers-in">
              <div class="ly"><i class="cb"></i><i class="sym"></i><em>majrivers</em></div>
              <div class="ly"><i class="cb"></i><i class="sym"><s class="ln c-pipe"></s></i><em>pipelines</em></div>
              <div class="ly sel"><i class="cb"></i><i class="sym"><s class="pt c-popp"></s></i><em>popp</em></div>
              <div class="ly"><i class="cb"></i><i class="sym"><s class="pt c-vert"></s></i><em>Vertices</em><svg class="mem"><use href="#memchip"/></svg></div>
              <div class="ly"><i class="cb"></i><i class="sym"><s class="sw c-pink"></s></i><em>Intersection</em><svg class="mem"><use href="#memchip"/></svg></div>
              <div class="ly"><i class="cb"></i><i class="sym"><s class="sw c-purp"></s></i><em>bufor railroads</em><svg class="mem"><use href="#memchip"/></svg></div>
              <div class="ly act"><i class="cb chk">✓</i><i class="sym"><s class="sw c-green"></s></i><em>Difference</em><svg class="mem"><use href="#memchip"/></svg></div>
              <div class="ly"><i class="cb"></i><i class="sym"><s class="sw c-rose"></s></i><em>bufor airports2</em><svg class="mem"><use href="#memchip"/></svg></div>
              <div class="ly"><i class="cb"></i><i class="sym"><s class="pt c-orng"></s></i><em>airports2</em><svg class="mem"><use href="#memchip"/></svg></div>
              <div class="ly"><i class="cb"></i><i class="sym"><s class="ln c-rail"></s></i><em>railroads</em></div>
              <div class="ly"><i class="cb"></i><i class="sym"><s class="ln c-geom"></s></i><em>Added geom info</em><svg class="mem"><use href="#memchip"/></svg></div>
              <div class="ly"><i class="cb"></i><i class="sym"><s class="sw c-gold"></s></i><em>Pasted</em><svg class="mem"><use href="#memchip"/></svg></div>
              <div class="ly"><i class="cb"></i><i class="sym"><s class="sw c-lime"></s></i><em>Buffered</em><svg class="mem"><use href="#memchip"/></svg></div>
              <div class="ly"><i class="cb"></i><i class="sym"><s class="pt c-mauve"></s></i><em>Intersection</em><svg class="mem"><use href="#memchip"/></svg></div>
              <div class="ly"><i class="cb"></i><i class="sym"><s class="pt c-indigo"></s></i><em>Intersections</em><svg class="mem"><use href="#memchip"/></svg></div>
              <div class="ly"><i class="cb"></i><i class="sym"><s class="pt c-crim"></s></i><em>Intersection</em><svg class="mem"><use href="#memchip"/></svg></div>
              <div class="ly"><i class="cb"></i><i class="sym"><s class="ln c-salm"></s></i><em>Intersection</em><svg class="mem"><use href="#memchip"/></svg></div>
              <div class="ly"><i class="cb"></i><i class="sym"><s class="sw c-slate"></s></i><em>bristol</em><svg class="mem"><use href="#memchip"/></svg></div>
              <div class="ly"><i class="cb"></i><i class="sym"><s class="sw c-pink"></s></i><em>regions</em></div>
              <div class="ly"><i class="cb"></i><i class="sym"><s class="ln c-riv"></s></i><em>rivers</em></div>
              <div class="ly"><i class="cb"></i><i class="sym"><s class="sw c-must"></s></i><em>swamp</em></div>
              <div class="ly"><i class="cb"></i><i class="sym"><s class="pt c-brown"></s></i><em>storagep</em></div>
              <div class="ly"><i class="cb"></i><i class="sym"><s class="ln c-trail"></s></i><em>trails</em></div>
              <div class="ly"><i class="cb"></i><i class="sym"><s class="sw c-slate"></s></i><em>tundra</em></div>
              <div class="ly"><i class="cb"></i><i class="sym"><s class="sw c-green"></s></i><em>mixedtrees</em><svg class="mem"><use href="#memchip"/></svg></div>
              <div class="ly"><i class="cb"></i><i class="sym"><s class="sw c-must"></s></i><em>deciduous</em><svg class="mem"><use href="#memchip"/></svg></div>
              <div class="ly"><i class="exp exp-ly"></i><i class="cb"></i><i class="sym"><svg class="grp"><use href="#folderg"/></svg></i><em>trees</em></div>
            </div>
            <div class="vscroll vs-layers"><i class="sb-up"></i><i class="sb-thumb"></i><i class="sb-down"></i></div>
          </div>
        </section>
      </aside>
      <main class="map">
        <svg class="mapsvg" viewBox="373 204 1547 844">
          <g class="bub">
            <circle cx="803" cy="372" r="24.300"/><circle cx="807" cy="373" r="24.300"/><circle cx="810" cy="381" r="24.300"/><circle cx="785" cy="385" r="24.300"/><circle cx="790" cy="378" r="24.300"/><circle cx="787" cy="388" r="24.300"/>
            <circle cx="795" cy="451" r="24.300"/><circle cx="778" cy="443" r="24.300"/><circle cx="782" cy="470" r="24.300"/><circle cx="768" cy="491" r="24.300"/><circle cx="772" cy="491" r="24.300"/><circle cx="791" cy="502" r="24.300"/><circle cx="790" cy="465" r="24.300"/><circle cx="785" cy="462" r="24.300"/>
          </g>
          <path class="blob" d="M778.300 408.300C775.500 400 774 392 774.300 383.300C775 376 780 367 786.700 361.700C790 359 794 358 798.300 357.700C804 357.500 808 359 811.700 361.700L821.700 371.700C823 375 822.500 379 821 381.700C819 385 817 386.500 815 387.300L803.300 387.300L798.700 385L800 393.300L803 405L830 420L815 437L801.700 438.300L795.300 426.700L790 440.700L791.700 450L800 456.700L801.700 470L810 478.300L811.700 483.300L803.300 496.700L801.700 505C799 510 796.500 512.500 793.300 513.300C789 514 786 513 783.300 511.700L778.300 505L779.300 488.300L771.700 480L770 466.700L766.700 450L766.700 436.700L771 420Z"/>
          <path class="blob-edge" d="M778.300 408.300C775.500 400 774 392 774.300 383.300C775 376 780 367 786.700 361.700C790 359 794 358 798.300 357.700C804 357.500 808 359 811.700 361.700L821.700 371.700C823 375 822.500 379 821 381.700C819 385 817 386.500 815 387.300L803.300 387.300L798.700 385L800 393.300L803 405"/>
          <path class="blob-edge" d="M801.700 438.300L795.300 426.700L790 440.700L791.700 450L800 456.700L801.700 470L810 478.300L811.700 483.300L803.300 496.700L801.700 505C799 510 796.500 512.500 793.300 513.300C789 514 786 513 783.300 511.700L778.300 505L779.300 488.300L771.700 480L770 466.700L766.700 450L766.700 436.700L771 420"/>
          <g class="bub">
            <circle cx="635.300" cy="294.700" r="24.300"/><circle cx="688" cy="312.300" r="24.300"/><circle cx="636.300" cy="313.300" r="24.300"/><circle cx="664.300" cy="324.300" r="24.300"/><circle cx="650" cy="339.300" r="24.300"/><circle cx="646.700" cy="355" r="24.300"/><circle cx="648" cy="368" r="24.300"/><circle cx="635.700" cy="373.300" r="24.300"/>
            <circle cx="572.700" cy="338.700" r="24.300"/><circle cx="583.300" cy="349.700" r="24.300"/><circle cx="595.300" cy="372.300" r="24.300"/>
            <circle cx="518" cy="376" r="24.300"/><circle cx="532" cy="382" r="24.300"/>
            <circle cx="755.300" cy="318" r="24.300"/><circle cx="823.700" cy="321.700" r="24.300"/><circle cx="732" cy="343.700" r="24.300"/><circle cx="750.300" cy="365.700" r="24.300"/><circle cx="749" cy="401" r="24.300"/>
            <circle cx="695" cy="377.700" r="24.300"/><circle cx="695.700" cy="385" r="24.300"/><circle cx="647.700" cy="397" r="24.300"/>
            <circle cx="599.300" cy="421" r="24.300"/><circle cx="652" cy="431.300" r="24.300"/><circle cx="610.700" cy="442.300" r="24.300"/><circle cx="575" cy="444.700" r="24.300"/><circle cx="657.700" cy="461" r="24.300"/><circle cx="565" cy="481.700" r="24.300"/><circle cx="625" cy="479.700" r="24.300"/>
            <circle cx="709.300" cy="426.700" r="24.300"/><circle cx="704.300" cy="427.700" r="24.300"/><circle cx="708.300" cy="477" r="24.300"/>
            <circle cx="615" cy="537" r="24.300"/><circle cx="691.700" cy="542.300" r="24.300"/><circle cx="711.700" cy="523.300" r="24.300"/><circle cx="666" cy="531" r="24.300"/><circle cx="716" cy="513.700" r="24.300"/><circle cx="763.300" cy="516.300" r="24.300"/><circle cx="750.700" cy="568.300" r="24.300"/><circle cx="660" cy="587.700" r="24.300"/>
            <circle cx="492.300" cy="555" r="24.300"/><circle cx="496.300" cy="573" r="24.300"/><circle cx="594" cy="629" r="24.300"/><circle cx="528" cy="654" r="24.300"/><circle cx="486.500" cy="672" r="24.300"/><circle cx="395" cy="668" r="24.300"/>
            <circle cx="828.300" cy="391.700" r="24.300"/><circle cx="858.300" cy="404.300" r="24.300"/><circle cx="877.300" cy="412.700" r="24.300"/><circle cx="836.700" cy="441.300" r="24.300"/><circle cx="830" cy="470" r="24.300"/><circle cx="842.700" cy="486.300" r="24.300"/>
            <circle cx="924.700" cy="499.300" r="24.300"/>
            <circle cx="983" cy="487" r="24.300"/><circle cx="985" cy="490" r="24.300"/>
          </g>
          <ellipse class="hole" cx="984" cy="484" rx="12" ry="16"/>
          <g class="bub">
            <circle cx="985" cy="513" r="24.300"/><circle cx="992" cy="522" r="24.300"/><circle cx="1022" cy="545" r="24.300"/><circle cx="1037" cy="546" r="24.300"/><circle cx="1048" cy="551" r="24.300"/><circle cx="1045" cy="577" r="24.300"/><circle cx="1072" cy="584" r="24.300"/>
            <circle class="lone" cx="729" cy="779" r="24.300"/>
          </g>
        </svg>
      </main>
    </div>

    <footer class="status">
      <div class="locator"><svg class="loc-ic" viewBox="0 0 16 16"><circle cx="6.500" cy="6.500" r="5" fill="none" stroke="#8a8a8a" stroke-width="1.300"/><path d="M10 10l5 5" stroke="#8a8a8a" stroke-width="1.500"/></svg><span>Type to locate (Ctrl+K)</span></div>
      <span class="st-spacer"></span>
      <label class="st-lb w-coord">Coordinate</label>
      <span class="field f-coord">5724530,6221100</span>
      <svg class="st-ic"><use href="#crs"/></svg>
      <label class="st-lb w-scale">Scale</label>
      <span class="field f-scale">1:15479961<i class="cmb-btn"><i class="arr-s"></i></i></span>
      <svg class="st-ic st-lock"><use href="#lock"/></svg>
      <label class="st-lb w-mag">Magnifier</label>
      <span class="field f-mag">100%<i class="spin"></i></span>
      <label class="st-lb w-rot">Rotation</label>
      <span class="field f-rot">0.0 °<i class="spin"></i></span>
      <span class="cb st-cb chk">✓</span>
      <label class="st-lb w-rnd">Render</label>
      <svg class="st-ic st-globe"><use href="#globe"/></svg>
      <label class="st-lb w-epsg">EPSG:2964</label>
      <svg class="st-ic st-msg"><use href="#msg"/></svg>
    </footer>
  </div>
</div>

<section class="dialog">
  <header class="dlg-title">Difference</header>
  <div class="dlg-body">
    <div class="dlg-top">
      <div class="dlg-left">
        <div class="tabs"><span class="tab tab-on">Parameters</span><span class="tab">Log</span></div>
        <div class="tabpane">
          <div class="f-label">Input layer</div>
          <div class="f-row">
            <div class="combo"><svg class="cmb-ic"><use href="#folderg"/></svg>bufor airports2 [EPSG:2964]<i class="arr-s"></i></div>
            <span class="f-ic"><svg><use href="#reload"/></svg></span><span class="f-ic"><svg><use href="#wrench"/></svg></span>
            <button class="dots">...<i class="arr-xs"></i></button>
          </div>
          <div class="f-check dis"><i class="cb"></i>Selected features only</div>
          <div class="f-label l2">Overlay layer</div>
          <div class="f-row">
            <div class="combo"><svg class="cmb-ic"><use href="#folderg"/></svg>bufor railroads [EPSG:2964]<i class="arr-s"></i></div>
            <span class="f-ic"><svg><use href="#reload"/></svg></span><span class="f-ic"><svg><use href="#wrench"/></svg></span>
            <button class="dots">...<i class="arr-xs"></i></button>
          </div>
          <div class="f-check dis"><i class="cb"></i>Selected features only</div>
          <div class="f-label l2">Difference</div>
          <div class="f-row">
            <div class="lineedit">[Create temporary layer]</div>
            <button class="dots">...<i class="arr-xs"></i></button>
          </div>
          <div class="f-check f-last"><i class="cb chk">✓</i>Open output file after running algorithm</div>
        </div>
      </div>
      <div class="dlg-split"><i class="tri-l"></i><i class="split-dots"></i></div>
      <article class="helpbox">
        <h2>Difference</h2>
        <p>This algorithm extracts features<br>from the Input layer that fall<br>outside, or partially overlap,<br>features in the Overlay layer. In<br>layer features that partially overlap<br>feature(s) in the Overlay layer are<br>split along those features'<br>boundary and only the portions<br>outside the Overlay layer features<br>are retained.</p>
        <p>Attributes are not modified,<br>although properties such as area or<br>length of the features will be<br>modified by the difference<br>operation. If such properties are<br>stored as attributes, those<br>attributes will have to be manually<br>updated.</p>
      </article>
    </div>
    <div class="dlg-prog"><div class="progress">0%</div><button class="btn btn-cancel">Cancel</button></div>
    <div class="dlg-btns">
      <button class="btn b-help"><svg viewBox="0 0 24 24"><use href="#qhelp"/><text x="12" y="17" class="it-qh">?</text></svg>Help</button>
      <button class="btn b-batch">Run as Batch Process…</button>
      <span class="btn-gap"></span>
      <button class="btn b-close"><svg><use href="#qclose"/></svg><u>C</u>lose</button>
      <button class="btn b-run"><svg><use href="#qok"/></svg>Run</button>
    </div>
  </div>
</section>
</body>
</html>
```
FILE: styles.css
```css
* { box-sizing: border-box; }
html, body { margin: 0; height: 100%; overflow: hidden; }
body { width: 1920px; height: 1080px; position: relative; background: #1d1d1d; font-family: "Lato", "Liberation Sans", sans-serif; font-size: 15px; color: #111; display: flex; flex-direction: column; }
.defs { width: 0; height: 0; position: absolute; }
i, b, em, s { font-style: normal; font-weight: normal; text-decoration: none; }

/* symbol text */
.it-a { font: 11px "Liberation Sans", sans-serif; fill: #555; }
.it-11 { font: bold 7px "Liberation Sans", sans-serif; fill: #999; text-anchor: middle; }
.it-i { font: italic bold 15px "Liberation Serif", serif; fill: #fff; text-anchor: middle; }
.it-i2 { font-size: 18px; }
.it-t { font: bold 15px "Liberation Serif", serif; fill: #444; text-anchor: middle; }
.it-abc { font: bold 8.500px "Liberation Sans", sans-serif; fill: #333; text-anchor: middle; }
.it-red { fill: #e81414; }
.it-gray { fill: #aaa; }
.it-q { font: bold 14px "Liberation Sans", sans-serif; fill: #fff; text-anchor: middle; }
.it-qh { font: 15px "Liberation Sans", sans-serif; fill: #fff; text-anchor: middle; }
.it-eps { font: 17px "Liberation Serif", serif; fill: #7a3f9a; text-anchor: middle; }
.it-db { font: bold 7px "Liberation Sans", sans-serif; fill: #fff; text-anchor: middle; }

/* top bar */
.topbar { height: 27px; flex: none; background: #1d1d1d; color: #e8e8e8; display: flex; align-items: center; position: relative; font-size: 15.500px; }
.tb-act { margin-left: 11px; }
.tb-app { margin-left: 33px; display: flex; align-items: center; gap: 5px; color: #ddd; font-size: 14.700px; }
.tb-q { width: 17px; height: 17px; margin-right: 3px; }
.caret { width: 0; height: 0; border: 5px solid transparent; border-top: 5px solid #e8e8e8; border-bottom: 0; display: inline-block; margin-left: 3px; }
.tb-clock { position: absolute; left: 959px; display: flex; gap: 16px; font-size: 15px; }
.tb-tray { margin-left: auto; display: flex; align-items: center; gap: 12px; padding-right: 16px; }
.tb-tray .caret { margin-left: -2px; }
.tray { width: 16px; height: 16px; }

/* dock */
.desktop { flex: 1; display: flex; min-height: 0; }
.dock { width: 72px; flex: none; background: linear-gradient(180deg, #4b1f24 0%, #3a1a2a 30%, #231227 65%, #211126 100%); display: flex; flex-direction: column; align-items: center; padding-top: 4px; }
.dk { width: 64px; height: 64px; margin-bottom: 4px; display: flex; align-items: center; justify-content: center; position: relative; border-radius: 5px; flex: none; }
.dk-ic { width: 48px; height: 48px; }
.dk-ic.dk-lg { width: 50px; height: 50px; }
.dk-act { background: #4b3a4f; }
.dk-run::before { content: ""; position: absolute; left: 0; top: 29px; width: 6px; height: 6px; border-radius: 50%; background: #e9541f; }
.dk-t { font: bold 15px "Liberation Sans", sans-serif; fill: #fff; text-anchor: middle; }
.dk-rd { font: bold 16px "Liberation Sans", sans-serif; fill: #fff; text-anchor: middle; }
.dk-apps { margin-top: auto; margin-bottom: 20px; display: grid; grid-template-columns: repeat(3, 6px); gap: 6px; }
.dk-apps i { width: 6px; height: 6px; background: #eee; border-radius: 1.500px; }

/* window */
.window { flex: 1; min-width: 0; display: flex; flex-direction: column; background: #eeeeee; }
.win-title { height: 37px; flex: none; background: #3f3e3c; color: #dcdcdc; display: flex; align-items: center; justify-content: center; position: relative; padding-bottom: 2px; }
.win-name { font-weight: 700; font-size: 16px; }
.win-ctl { position: absolute; right: 0; top: 0; height: 37px; width: 110px; display: flex; align-items: center; }
.ctl-min { position: absolute; left: 19px; top: 22px; width: 9px; height: 1px; background: #aaa; }
.ctl-max { position: absolute; left: 53px; top: 14px; width: 7px; height: 8px; border: 1px solid #aaa; box-shadow: 1px -1px 0 -0.200px #888; }
.ctl-close { position: absolute; left: 83px; top: 9px; width: 18px; height: 18px; border-radius: 50%; background: #5c5c5c; color: #eee; font: 12px "DejaVu Sans", sans-serif; line-height: 18px; text-align: center; }

.menubar { height: 22px; flex: none; display: flex; align-items: center; padding-left: 10px; padding-bottom: 2px; border-bottom: 1px solid #d3d3d3; font-size: 15.200px; gap: 15.300px; }
.menubar u { text-underline-offset: 2px; text-decoration-thickness: 1px; }

.toolbar { height: 39px; flex: none; display: flex; align-items: center; background: linear-gradient(180deg, #f9f9f9, #f0f0f0); border-bottom: 1px solid #c6c6c6; }
.i { width: 33px; height: 32px; flex: none; display: flex; align-items: center; justify-content: center; }
.i svg { width: 24px; height: 24px; }
.i.on { background: #dcdcdc; border: 1px solid #b8b8b8; border-radius: 3px; width: 31px; margin: 0 1px; }
.i.off svg { opacity: .42; filter: grayscale(1); }
.i.off2 svg { opacity: .7; }
.grip { flex: none; height: 24px; background-image: radial-gradient(circle, #c0c0c0 0.800px, transparent 1px); background-size: 3px 3px; background-repeat: repeat-y; background-position: center top; }
.g12 { width: 12px; } .g13 { width: 13px; } .g14 { width: 14px; } .g15 { width: 15px; } .g16 { width: 16px; }
.sep { flex: none; height: 24px; position: relative; }
.s6 { width: 6px; } .s12 { width: 12px; }
.sep::after { content: ""; position: absolute; left: 50%; top: 0; width: 1px; height: 24px; background: #cfcfcf; }
.arr { width: 12px; flex: none; display: flex; justify-content: center; }
.arr::after { content: ""; border: 4px solid transparent; border-top: 5px solid #555; border-bottom: 0; }
.arr-off::after { border-top-color: #ccc; }

/* panels */
.middle { flex: 1; min-height: 0; display: flex; }
.side { width: 296px; flex: none; display: flex; flex-direction: column; padding-left: 1px; padding-right: 2px; }
.dockw { display: flex; flex-direction: column; min-height: 0; }
.dock-browser { height: 290px; }
.dock-layers { flex: 1; }
.dock-title { height: 19px; flex: none; display: flex; align-items: center; justify-content: space-between; padding: 0 2px 1px 3px; font-size: 15px; }
.dock-btns { display: flex; gap: 3px; }
.dbtn { width: 11px; height: 11px; border: 1px solid #555; border-radius: 2px; font: 9px/9px "DejaVu Sans", sans-serif; text-align: center; color: #444; overflow: hidden; display: block; }
.dock-tools { height: 31px; flex: none; display: flex; align-items: center; padding: 0 0 2px 2px; }
.dock-tools .t { width: 25px; height: 24px; flex: none; display: flex; align-items: center; justify-content: center; }
.t svg { width: 17px; height: 17px; }
.arr-t { width: 13px; margin-left: -1px; margin-right: 0; }
.tree { flex: 1; min-height: 0; border: 1px solid #bdbdbd; background: #fff; position: relative; overflow: hidden; display: flex; }
.tree-in { flex: 1; min-width: 0; overflow: hidden; }
.br { height: 19px; display: flex; align-items: center; font-size: 15.300px; white-space: nowrap; color: #111; padding-bottom: 1px; }
.exp, .exp-none { width: 17px; margin-left: 7px; flex: none; display: flex; align-items: center; }
.exp::after { content: ""; border: 3.500px solid transparent; border-left: 4px solid #555; border-right: 0; }
.bi { width: 15px; height: 15px; margin-right: 5px; margin-left: 0; flex: none; }
.layers-in { margin-top: -10px; }
.ly { height: 19px; display: flex; align-items: center; white-space: nowrap; padding-left: 22px; position: relative; }
.ly em { font: italic bold 12.400px "DejaVu Sans", sans-serif; color: #858585; }
.ly.act em { font-style: normal; font-size: 12.800px; color: #000; }
.ly.sel { background: #308cc6; }
.ly.sel em { color: #fff; text-decoration: underline; }
.exp-ly { position: absolute; left: -5px; }
.cb { width: 14px; height: 14px; flex: none; border: 1px solid #b7b7b7; background: #fff; border-radius: 1px; display: inline-block; font: bold 12px/12px "DejaVu Sans", sans-serif; text-align: center; color: #111; }
.sym { width: 16px; height: 16px; margin-left: 6px; margin-right: 7px; flex: none; display: flex; align-items: center; justify-content: center; }
.sw { width: 16px; height: 16px; border: 1px solid #555; opacity: .95; display: block; }
.pt { width: 7px; height: 7px; border-radius: 50%; display: block; border: 1px solid rgba(60,60,60,.5); }
.ln { width: 16px; height: 2px; display: block; }
.grp { width: 16px; height: 16px; }
.mem { position: absolute; left: 254px; top: 1px; width: 17px; height: 17px; background: #ececec; border-radius: 2px; }
.c-pipe { background: #f7d7a4; } .c-popp { background: #95679a; } .c-vert { background: #b03843; }
.c-pink { background: #f4a7b6; } .c-purp { background: #8a5a9b; } .c-green { background: #729b6f; }
.c-rose { background: #e8708f; } .c-orng { background: #f39a1e; } .c-rail { background: #d1b9d6; }
.c-geom { background: #d5cce6; } .c-gold { background: #e3b437; } .c-lime { background: #b8cf4a; }
.c-mauve { background: #8e70a8; } .c-indigo { background: #4a12c4; } .c-crim { background: #d63f6c; }
.c-salm { background: #f09a9f; } .c-slate { background: #7e8c8d; } .c-riv { background: #bcd4bc; }
.c-must { background: #d4b43c; } .c-brown { background: #a1684a; } .c-trail { background: #c6e0c2; }
.vscroll { width: 14px; flex: none; border-left: 1px solid #c8c8c8; display: flex; flex-direction: column; background: #f6f6f6; }
.sb-up, .sb-down { height: 14px; flex: none; display: flex; align-items: center; justify-content: center; background: #f4f4f4; }
.sb-up::after { content: ""; border: 4px solid transparent; border-bottom: 4px solid #444; border-top: 0; }
.sb-down::after { content: ""; border: 4px solid transparent; border-top: 4px solid #444; border-bottom: 0; }
.sb-down { margin-top: auto; border-top: 1px solid #ccc; }
.sb-thumb { background: #dedede; display: block; border-top: 1px solid #d0d0d0; border-bottom: 1px solid #d0d0d0; }
.vs-browser .sb-thumb { height: 80px; margin-top: 133px; }
.vs-layers .sb-thumb { height: 115px; }
.splitter { height: 7px; flex: none; display: flex; justify-content: center; align-items: center; }
.splitter i { width: 20px; height: 2px; background-image: radial-gradient(circle, #bbb .8px, transparent 1px); background-size: 3px 2px; display: block; }

.map { flex: 1; min-width: 0; margin-left: 4px; background: #fff; border-left: 1px solid #bdbdbd; border-top: 1px solid #bdbdbd; overflow: hidden; display: flex; }
.mapsvg { width: 1547px; height: 844px; flex: none; display: block; }
.bub circle { fill: #729b6f; stroke: #2f332e; stroke-width: 1; }
.bub .lone { stroke: #1c1f1b; stroke-width: 1.600; }
.blob { fill: #fff; stroke: none; }
.blob-edge { fill: none; stroke: #2f332e; stroke-width: 1; stroke-linejoin: round; }
.hole { fill: #fff; stroke: #2f332e; stroke-width: 1; }

/* status */
.status { height: 32px; flex: none; display: flex; align-items: center; background: #eeeeee; font-size: 13px; padding-left: 4px; white-space: nowrap; }
.locator { width: 267px; height: 24px; background: #fff; border: 1px solid #b4b4b4; border-radius: 3px; display: flex; align-items: center; gap: 7px; padding-left: 8px; color: #7c7c7c; font-size: 14.500px; }
.loc-ic { width: 13px; height: 13px; }
.st-spacer { width: 680px; flex: none; }
.st-lb { flex: none; }
.w-coord { width: 65px; } .w-scale { width: 32px; } .w-mag { width: 56px; } .w-rot { width: 58px; margin-left: 9px; } .w-rnd { width: 48px; margin-left: 7px; } .w-epsg { width: 80px; }
.field { height: 23px; flex: none; background: #fff; border: 1px solid #b4b4b4; border-radius: 3px; display: flex; align-items: center; padding-left: 4px; position: relative; }
.f-coord { width: 120px; justify-content: center; padding-left: 0; }
.f-scale { width: 96px; }
.f-mag { width: 98px; }
.f-rot { width: 92px; }
.st-ic { width: 16px; height: 16px; flex: none; margin: 0 13px 0 4px; }
.st-lock { margin: 0 7px 0 11px; width: 15px; }
.st-cb { margin-left: 7px; }
.st-globe { width: 14px; margin: 0 3px 0 0; }
.st-msg { margin: 0 0 0 2px; width: 17px; height: 17px; }
.cmb-btn { position: absolute; right: 0; top: 0; bottom: 0; width: 19px; border-left: 1px solid #ccc; display: flex; align-items: center; justify-content: center; }
.arr-s { display: block; border: 3.500px solid transparent; border-top: 4px solid #555; border-bottom: 0; }
.spin { position: absolute; right: 0; top: 0; bottom: 0; width: 14px; border-left: 1px solid #ddd; background: linear-gradient(#555,#555) no-repeat center / 5px 1px; }
.spin::before, .spin::after { content: ""; position: absolute; left: 3px; border: 3.500px solid transparent; }
.spin::before { top: 3px; border-bottom: 4px solid #555; border-top: 0; }
.spin::after { bottom: 3px; border-top: 4px solid #555; border-bottom: 0; }

/* dialog */
.dialog { position: absolute; left: 1110px; top: 150px; width: 830px; height: 582px; background: #eeeeee; border-radius: 8px 8px 0 0; box-shadow: 0 2px 14px rgba(0,0,0,.45); overflow: hidden; font-size: 15.600px; }
.dlg-title { height: 37px; background: #323030; color: #f2f2f2; font-weight: 700; font-size: 16px; display: flex; align-items: center; justify-content: center; padding-left: 33px; padding-bottom: 2px; }
.dlg-body { padding: 11px 12px 12px 11px; height: 545px; display: flex; flex-direction: column; }
.dlg-top { height: 436px; flex: none; display: flex; }
.dlg-left { width: 568px; flex: none; display: flex; flex-direction: column; }
.tabs { height: 28px; flex: none; display: flex; align-items: flex-end; position: relative; z-index: 1; margin-bottom: -1px; }
.tab { height: 26px; border: 1px solid #bdbdbd; border-bottom-color: #bdbdbd; border-radius: 3px 3px 0 0; background: #e6e6e6; display: flex; align-items: center; padding: 0 12px; margin-left: -1px; }
.tab:first-child { margin-left: 0; }
.tab-on { height: 28px; width: 104px; background: #eeeeee; border-bottom-color: #eeeeee; justify-content: center; padding: 0; }
.tab:not(.tab-on) { width: 50px; justify-content: center; padding: 0; }
.tabpane { flex: 1; border: 1px solid #b8b8b8; padding: 5px 5px; display: flex; flex-direction: column; }
.f-label { height: 20px; line-height: 16px; margin-bottom: 3px; }
.f-label.l2 { line-height: 20px; margin-top: 6px; margin-bottom: 5px; }
.f-row { height: 25px; flex: none; display: flex; align-items: center; padding-right: 0; }
.combo { width: 448px; height: 25px; flex: none; background: #fafafa; border: 1px solid #b8b8b8; border-radius: 3px; display: flex; align-items: center; padding: 0 0 1px 4px; gap: 4px; position: relative; font-size: 15px; }
.combo .arr-s { position: absolute; right: 6px; top: 10px; }
.cmb-ic { width: 16px; height: 16px; flex: none; }
.f-ic { width: 36px; flex: none; display: flex; justify-content: center; }
.f-ic svg { width: 24px; height: 24px; }
.f-ic:first-of-type { margin-left: 4px; }
.dots { width: 29px; height: 25px; flex: none; margin-left: 3px; padding: 0; background: #f8f8f8; border: 1px solid #b8b8b8; border-radius: 3px; position: relative; font: 15px "Lato", sans-serif; color: #222; line-height: 26px; }
.arr-xs { position: absolute; right: 2px; bottom: 4px; border: 2.500px solid transparent; border-top: 3px solid #333; border-bottom: 0; }
.f-check { height: 20px; margin-top: 8px; flex: none; display: flex; align-items: center; gap: 4px; }
.f-check .cb { width: 14px; height: 14px; margin-left: 1px; }
.f-last { padding-bottom: 2px; }
.dis { color: #b4b4b4; }
.dis .cb { background: #eeeeee; border-color: #c4c4c4; }
.lineedit { width: 520px; height: 25px; flex: none; background: #fff; border: 1px solid #b8b8b8; border-radius: 3px; display: flex; align-items: center; padding-left: 1px; color: #7a7a7a; margin-right: 4px; }
.dlg-split { width: 17px; flex: none; position: relative; }
.tri-l { position: absolute; left: 5px; top: 3px; border: 4px solid transparent; border-right: 4px solid #333; border-left: 0; }
.split-dots { position: absolute; left: 8px; top: 215px; width: 2px; height: 22px; background-image: radial-gradient(circle, #bbb .7px, transparent 1px); background-size: 2px 3px; }
.helpbox { flex: 1; min-width: 0; background: #fff; border: 1px solid #c4c4c4; border-right: 0; padding: 0 3px; overflow: hidden; color: #555; font-size: 15.600px; line-height: 17.200px; white-space: nowrap; }
.helpbox h2 { margin: 3px 0 10px; font-size: 24px; line-height: 28px; font-weight: 700; color: #4d4d4d; }
.helpbox p { margin: 0 0 10px; }
.dlg-prog { display: flex; margin-top: 30px; height: 25px; flex: none; gap: 8px; }
.progress { width: 753px; flex: none; background: #fff; border: 1px solid #b4b4b4; border-radius: 3px; text-align: center; line-height: 23px; }
.btn { height: 25px; border: 1px solid #b8b8b8; border-radius: 3px; background: linear-gradient(#f8f8f8,#efefef); font: inherit; color: #111; display: flex; align-items: center; justify-content: center; gap: 1px; padding: 0; flex: none; }
.btn svg { width: 16px; height: 16px; }
.btn-cancel { flex: 1; color: #b0b0b0; border-color: #ccc; background: #eeeeee; justify-content: flex-start; padding-left: 16px; }
.dlg-btns { display: flex; margin-top: 6px; height: 25px; flex: none; }
.b-help { width: 79px; }
.b-batch { width: 185px; margin-left: 7px; }
.btn-gap { width: 403px; flex: none; }
.b-close { width: 79px; }
.b-run { width: 70px; margin-left: 8px; border-color: #3b7ea9; justify-content: flex-start; padding-left: 15px; }
```
